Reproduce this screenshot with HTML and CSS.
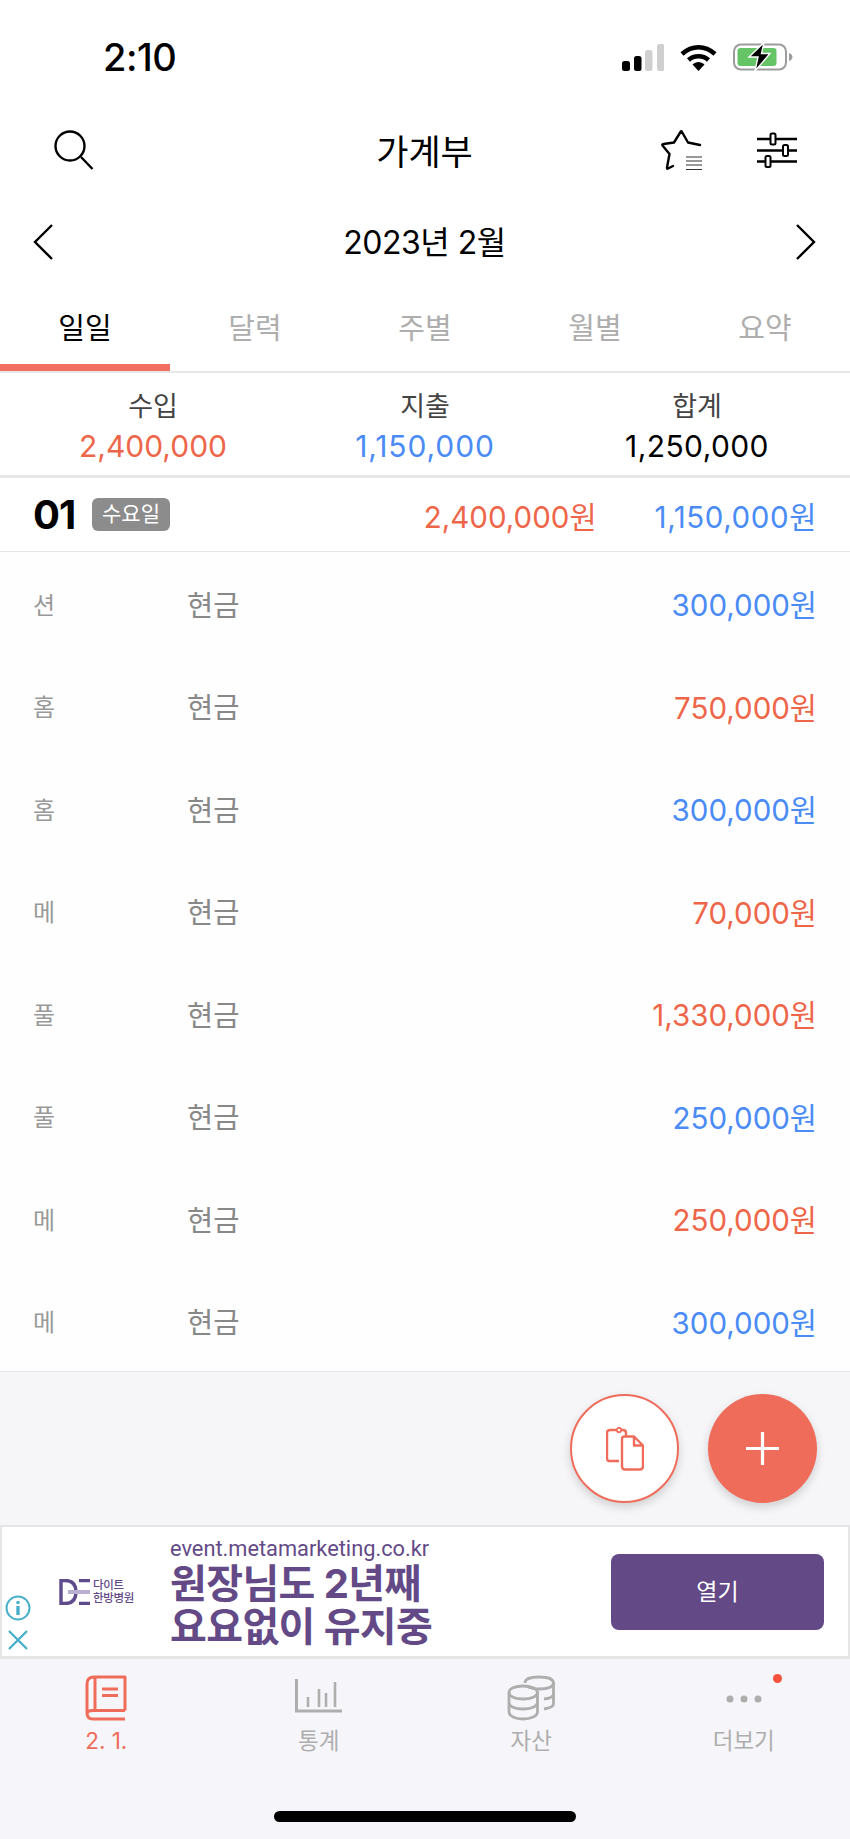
FILE: index.html
```html
<!DOCTYPE html>
<html lang="ko">
<head>
    <meta charset="UTF-8">
    <meta name="viewport" content="width=device-width, initial-scale=1.0">
    <title>가계부</title>
    <link rel="stylesheet" href="styles.css">
</head>
<body>
    <div class="status-bar">
        <span class="clock">2:10</span>
        <div class="status-icons">
            <svg width="42" height="27" viewBox="0 0 42 27">
                <rect x="0" y="17" width="8" height="10" rx="2.5" fill="#000"/>
                <rect x="12" y="12" width="7.5" height="15" rx="2.5" fill="#000"/>
                <rect x="23" y="6" width="7.5" height="21" rx="2.5" fill="#cfcfcf"/>
                <rect x="35" y="0" width="7.5" height="27" rx="2.5" fill="#cfcfcf"/>
            </svg>
            <svg class="wifi" width="37" height="27" viewBox="0 0 37 27">
                <path d="M2 10 C12 1 25 1 35 10" fill="none" stroke="#000" stroke-width="4.6"/>
                <path d="M8.5 16 C14 11 23 11 28.500 16" fill="none" stroke="#000" stroke-width="4.6"/>
                <path d="M12.500 20.500 C16 17 21 17 24.500 20.500 L18.500 27 Z" fill="#000"/>
            </svg>
            <svg class="battery" width="60" height="30" viewBox="0 0 60 30">
                <rect x="1" y="2.500" width="52" height="25" rx="7" fill="#fff" stroke="#9c9c9c" stroke-width="2"/>
                <rect x="4.500" y="6" width="39" height="18" rx="3" fill="#65c466"/>
                <path d="M56 11 C58.500 12 59.500 13.500 59.500 15 C59.500 16.500 58.500 18 56 19 Z" fill="#9c9c9c"/>
                <path d="M31 0.500 L16 15 H25 L22 29 L37 11.500 H28.500 Z" fill="#000" stroke="#fff" stroke-width="1.400"/>
            </svg>
        </div>
    </div>

    <div class="app-bar">
        <svg class="icon-search" width="40" height="40" viewBox="0 0 40 40">
            <circle cx="16" cy="16" r="14.500" fill="none" stroke="#000" stroke-width="2.400"/>
            <path d="M27 27 L38.500 39" fill="none" stroke="#000" stroke-width="2.400"/>
        </svg>
        <h1 class="title">가계부</h1>
        <svg class="icon-star" width="42" height="43" viewBox="0 0 42 43">
            <path d="M12 36 L7 38.500 C6 39 6 38.500 6 37.500 L8.500 24 L1.500 15.500 C1 14.500 1.500 14 2.500 14 L13 12.500 L19.500 2 C20 1 20.500 1 21 2 L27 12.500 L39 15" fill="none" stroke="#000" stroke-width="2.400" stroke-linecap="round" stroke-linejoin="round"/>
            <path d="M25 27 H41 M25 31 H41 M25 35 H41 M25 39.500 H41" fill="none" stroke="#333" stroke-width="1.200"/>
        </svg>
        <svg class="icon-sliders" width="40" height="37" viewBox="0 0 40 37">
            <path d="M0 7 H40 M0 18.500 H40 M0 29.500 H40" fill="none" stroke="#000" stroke-width="2.400"/>
            <rect x="13.500" y="1.500" width="5" height="11" rx="1.500" fill="#fff" stroke="#000" stroke-width="2"/>
            <rect x="26" y="13" width="5" height="11" rx="1.500" fill="#fff" stroke="#000" stroke-width="2"/>
            <rect x="8.500" y="24" width="5" height="11" rx="1.500" fill="#fff" stroke="#000" stroke-width="2"/>
        </svg>
    </div>

    <div class="date-bar">
        <svg width="20" height="36" viewBox="0 0 20 36"><path d="M19 1 L2 18 L19 35" fill="none" stroke="#000" stroke-width="2.400"/></svg>
        <span class="date-label">2023년 2월</span>
        <svg class="next" width="20" height="36" viewBox="0 0 20 36"><path d="M1 1 L18 18 L1 35" fill="none" stroke="#000" stroke-width="2.400"/></svg>
    </div>

    <div class="tabs">
        <div class="tab active">일일</div>
        <div class="tab">달력</div>
        <div class="tab">주별</div>
        <div class="tab">월별</div>
        <div class="tab">요약</div>
    </div>

    <div class="summary">
        <div class="summary-item">
            <span class="summary-label">수입</span>
            <span class="summary-value income">2,400,000</span>
        </div>
        <div class="summary-item">
            <span class="summary-label">지출</span>
            <span class="summary-value expense">1,150,000</span>
        </div>
        <div class="summary-item">
            <span class="summary-label">합계</span>
            <span class="summary-value total">1,250,000</span>
        </div>
    </div>

    <div class="day-head">
        <span class="day-num">01</span>
        <span class="day-pill">수요일</span>
        <span class="day-income income">2,400,000원</span>
        <span class="day-expense expense">1,150,000원</span>
    </div>

    <div class="rows">
        <div class="row"><span class="row-cat">션</span><span class="row-acc">현금</span><span class="row-amt expense">300,000원</span></div>
        <div class="row"><span class="row-cat">홈</span><span class="row-acc">현금</span><span class="row-amt income">750,000원</span></div>
        <div class="row"><span class="row-cat">홈</span><span class="row-acc">현금</span><span class="row-amt expense">300,000원</span></div>
        <div class="row"><span class="row-cat">메</span><span class="row-acc">현금</span><span class="row-amt income">70,000원</span></div>
        <div class="row"><span class="row-cat">풀</span><span class="row-acc">현금</span><span class="row-amt income">1,330,000원</span></div>
        <div class="row"><span class="row-cat">풀</span><span class="row-acc">현금</span><span class="row-amt expense">250,000원</span></div>
        <div class="row"><span class="row-cat">메</span><span class="row-acc">현금</span><span class="row-amt income">250,000원</span></div>
        <div class="row"><span class="row-cat">메</span><span class="row-acc">현금</span><span class="row-amt expense">300,000원</span></div>
    </div>

    <div class="fab-area">
        <button class="fab fab-copy">
            <svg width="38" height="44" viewBox="0 0 38 44">
                <path d="M13 34 H4 C2 34 1 33 1 31 V6 C1 4 2 3 4 3 H10 M16 3 H17 C19 3 20 4 20 6 V9" fill="none" stroke="#ef6c5b" stroke-width="2.400"/>
                <circle cx="13" cy="3" r="2.200" fill="none" stroke="#ef6c5b" stroke-width="1.800"/>
                <path d="M16 12 C16 10.500 17 9.500 18.500 9.500 H28 L37 18.500 V39 C37 41.500 36 42.500 34 42.500 H19 C17 42.500 16 41.500 16 39 Z M28 9.500 V18.500 H37" fill="none" stroke="#ef6c5b" stroke-width="2.400" stroke-linejoin="round"/>
            </svg>
        </button>
        <button class="fab fab-add">
            <svg width="33" height="33" viewBox="0 0 33 33"><path d="M16.500 0 V33 M0 16.500 H33" fill="none" stroke="#fff" stroke-width="3.200"/></svg>
        </button>
    </div>

    <div class="ad">
        <div class="ad-marks">
            <svg width="26" height="26" viewBox="0 0 26 26">
                <circle cx="13" cy="13" r="11.500" fill="none" stroke="#49b0cb" stroke-width="2"/>
                <circle cx="13" cy="7.500" r="1.800" fill="#49b0cb"/>
                <rect x="11.300" y="11" width="3.400" height="9" fill="#49b0cb"/>
            </svg>
            <svg width="20" height="20" viewBox="0 0 20 20"><path d="M1 1 L19 19 M19 1 L1 19" fill="none" stroke="#49b0cb" stroke-width="2.400"/></svg>
        </div>
        <div class="ad-logo">
            <svg width="31" height="26" viewBox="0 0 31 26">
                <path d="M2 1.500 H6 C14 1.500 17 6 17 13 C17 20 14 24.500 6 24.500 H2 Z" fill="none" stroke="#5f4a8b" stroke-width="3.400"/>
                <path d="M20 1.500 H31 M20 24.500 H31" fill="none" stroke="#5f4a8b" stroke-width="3.400"/>
                <rect x="9" y="11" width="22" height="4" fill="#b9afd0"/>
            </svg>
            <div class="ad-logo-text"><span>다이트</span><span>한방병원</span></div>
        </div>
        <div class="ad-copy">
            <div class="ad-url">event.metamarketing.co.kr</div>
            <div class="ad-head">원장님도 2년째</div>
            <div class="ad-head">요요없이 유지중</div>
        </div>
        <div class="ad-btn">열기</div>
    </div>

    <div class="tab-bar">
        <div class="nav-item on">
            <svg width="42" height="46" viewBox="0 0 42 46">
                <path d="M40 35.500 V2 H9 C4.500 2 2 4.500 2 9 V38 C2 42 4 44 8 44 H40 M40 35.500 H8 C4 35.500 2 37 2 39 M10 2 V35" fill="none" stroke="#ef6c5b" stroke-width="3" stroke-linejoin="round"/>
                <path d="M17 14 H33 M17 20.500 H33" fill="none" stroke="#ef6c5b" stroke-width="3"/>
            </svg>
            <span>2. 1.</span>
        </div>
        <div class="nav-item">
            <svg width="47" height="46" viewBox="0 0 47 46">
                <path d="M1.500 4 V36 H47" fill="none" stroke="#aeaeae" stroke-width="3"/>
                <path d="M13 22 V32 M24 14 V32 M31 18 V32 M40 7 V32" fill="none" stroke="#aeaeae" stroke-width="2.600"/>
            </svg>
            <span>통계</span>
        </div>
        <div class="nav-item">
            <svg width="48" height="46" viewBox="0 0 48 46">
                <g fill="none" stroke="#aeaeae" stroke-width="2.800">
                    <path d="M18 8 C18 4 24 2 32 2 C40 2 46.500 4 46.500 8 C46.500 12 40 14 32 14 C27 14 23 13.500 20.500 11.500"/>
                    <path d="M46.500 8 V29 C46.500 31.500 43 33 37 34 M46.500 18.500 C46.500 21.500 43 23.500 37 24"/>
                    <path d="M2 17.500 C2 13.500 8 11 16 11 C24 11 30.500 13.500 30.500 17.500 C30.500 21.500 24 24 16 24 C8 24 2 21.500 2 17.500 Z"/>
                    <path d="M2 17.500 V37 C2 41 8 44 16 44 C24 44 30.500 41 30.500 37 V17.500 M2 27.500 C2 31.500 8 34 16 34 C24 34 30.500 31.500 30.500 27.500"/>
                </g>
            </svg>
            <span>자산</span>
        </div>
        <div class="nav-item">
            <svg width="36" height="46" viewBox="0 0 36 46">
                <circle cx="4" cy="24" r="3.500" fill="#aeaeae"/>
                <circle cx="18" cy="24" r="3.500" fill="#aeaeae"/>
                <circle cx="32" cy="24" r="3.500" fill="#aeaeae"/>
            </svg>
            <span class="nav-dot"></span>
            <span>더보기</span>
        </div>
    </div>

    <div class="home-wrap"><div class="home-bar"></div></div>
</body>
</html>
```

FILE: styles.css
```css
* {
    margin: 0;
    padding: 0;
    box-sizing: border-box;
}

body {
    width: 850px;
    height: 1839px;
    overflow: hidden;
    background: #fff;
    color: #000;
    font-family: Inter, "Noto Sans CJK KR", sans-serif;
}

.income { color: #ee6649; }
.expense { color: #4a8bf5; }

.status-bar {
    height: 114px;
    display: flex;
    align-items: center;
    justify-content: space-between;
    padding: 0 57px 0 103px;
}

.clock {
    font-size: 38px;
    font-weight: 500;
    letter-spacing: -0.5px;
}

.status-icons {
    display: flex;
    align-items: center;
}

.wifi { margin-left: 16px; }
.battery { margin-left: 16px; }

.app-bar {
    height: 72px;
    display: flex;
    align-items: center;
    padding: 0 53px 0 54px;
}

.title {
    flex: 1;
    margin-top: -2px;
    text-align: center;
    font-size: 35px;
    font-weight: 400;
    padding-left: 94px;
}

.icon-star { margin-top: 2px; }
.icon-sliders { margin-left: 54px; }

.date-bar {
    height: 72px;
    margin-top: 20px;
    display: flex;
    align-items: center;
    justify-content: space-between;
    padding: 0 35px 0 33px;
}

.date-label {
    margin-top: -4px;
    font-size: 32px;
    letter-spacing: -0.5px;
}

.next { margin-right: -1px; }

.tabs {
    height: 95px;
    display: grid;
    grid-template-columns: repeat(5, 1fr);
    border-bottom: 2px solid #e8e8e8;
}

.tab {
    height: 93px;
    padding-top: 31px;
    line-height: 40px;
    text-align: center;
    font-size: 29px;
    color: #aeaeae;
}

.tab.active {
    color: #000;
    border-bottom: 7px solid #f26f5f;
}

.summary {
    height: 105px;
    display: grid;
    grid-template-columns: repeat(3, 1fr);
    padding: 15px 17px 0 17px;
    background: #fff;
    border-bottom: 3px solid #e6e6e6;
}

.summary-item {
    display: flex;
    flex-direction: column;
    align-items: center;
}

.summary-label {
    font-size: 27px;
    line-height: 38px;
    color: #444;
}

.summary-value {
    font-size: 30px;
    line-height: 40px;
}

.summary-value.expense { letter-spacing: 0.9px; }
.summary-value.total { letter-spacing: 0.4px; }

.day-head {
    height: 74px;
    display: flex;
    align-items: center;
    padding: 0 33px 0 33px;
    border-bottom: 1px solid #e6e6e6;
}

.day-num {
    font-size: 40px;
    font-weight: 700;
    width: 59px;
    letter-spacing: -1px;
}

.day-pill {
    width: 78px;
    height: 33px;
    line-height: 32px;
    border-radius: 6px;
    background: #8c8c8c;
    color: #fff;
    font-size: 21px;
    text-align: center;
}

.day-income {
    margin-left: auto;
    font-size: 29.5px;
}

.day-expense {
    margin-left: 58px;
    font-size: 29.5px;
    letter-spacing: 0.6px;
}

.rows {
    height: 820px;
    background: #fefefe;
    border-bottom: 1px solid #e6e6e6;
}

.row {
    height: 102.5px;
    display: flex;
    align-items: center;
    padding: 0 33px 0 33px;
}

.row-cat {
    width: 154px;
    font-size: 24px;
    color: #999;
}

.row-acc {
    font-size: 28.5px;
    color: #888;
}

.row-amt {
    margin-left: auto;
    font-size: 29.5px;
}

.fab-area {
    height: 153px;
    display: flex;
    justify-content: flex-end;
    gap: 29px;
    padding: 22px 33px 0 0;
    background: #f6f6f8;
}

.fab {
    width: 109px;
    height: 109px;
    border-radius: 50%;
    display: flex;
    align-items: center;
    justify-content: center;
    box-shadow: 0 4px 10px rgba(0,0,0,0.16);
}

.fab-copy {
    background: #fff;
    border: 2px solid #ef6c5b;
}

.fab-add {
    background: #ef6c5b;
    border: none;
}

.ad {
    position: relative;
    height: 134px;
    display: flex;
    align-items: center;
    background: #fff;
    border: 2px solid #e6e6e6;
    border-width: 2px 2px 3px 2px;
    padding-left: 57px;
    color: #634a87;
}

.ad-marks {
    position: absolute;
    left: 3px;
    bottom: 6px;
    display: flex;
    flex-direction: column;
    align-items: center;
    gap: 9px;
}

.ad-logo {
    width: 111px;
    display: flex;
    align-items: center;
    gap: 3px;
}

.ad-logo-text {
    display: flex;
    flex-direction: column;
    font-size: 11.5px;
    font-weight: 500;
    line-height: 13px;
    letter-spacing: -0.3px;
}

.ad-url {
    font-family: Roboto, sans-serif;
    font-size: 21.8px;
    line-height: 26px;
}

.ad-head {
    font-size: 40px;
    font-weight: 700;
    line-height: 43px;
    letter-spacing: -0.6px;
}

.ad-btn {
    width: 213px;
    height: 76px;
    margin-left: auto;
    margin-right: 24px;
    border-radius: 8px;
    background: #634a87;
    color: #fff;
    font-size: 23px;
    line-height: 76px;
    text-align: center;
}

.tab-bar {
    height: 142px;
    display: grid;
    grid-template-columns: repeat(4, 1fr);
    background: #f6f6fa;
    padding-top: 16px;
}

.nav-item {
    position: relative;
    display: flex;
    flex-direction: column;
    align-items: center;
    font-size: 22.5px;
    line-height: 30px;
    color: #aeaeae;
}

.nav-item svg { margin-bottom: 5px; }
.nav-item.on { color: #ef6c5b; }

.nav-dot {
    position: absolute;
    top: -1px;
    left: 135px;
    width: 9px;
    height: 9px;
    border-radius: 50%;
    background: #f4523b;
}

.home-wrap {
    height: 38px;
    background: #f6f6fa;
    padding-top: 10px;
}

.home-bar {
    width: 302px;
    height: 11px;
    margin: 0 auto;
    border-radius: 6px;
    background: #000;
}
```
